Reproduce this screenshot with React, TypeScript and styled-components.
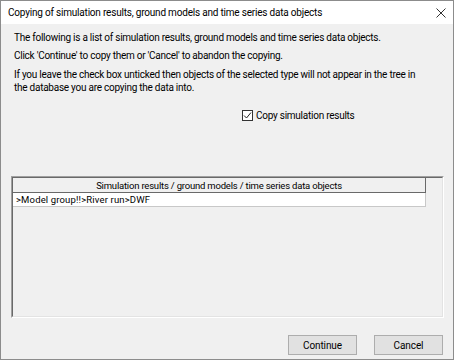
import React from "react";
import styled, { createGlobalStyle } from "styled-components";

const Global = createGlobalStyle`
  html, body { margin: 0; padding: 0; background: #f0f0f0; }
  body { font-family: Roboto, "Noto Sans", sans-serif; font-size: 10px; letter-spacing: -0.25px; color: #000; }
`;

const Window = styled.div`
  box-sizing: border-box;
  width: 454px;
  height: 360px;
  border: 1px solid #8c8c8c;
  background: #f0f0f0;
  display: flex;
  flex-direction: column;
`;

const TitleBar = styled.div`
  height: 23px;
  background: #fff;
  display: flex;
  align-items: center;
  justify-content: space-between;
  padding-left: 7px;
  flex: none;
`;

const Title = styled.span`
  font-size: 10px;
  letter-spacing: -0.2px;
  color: #000;
`;

const CloseButton = styled.div`
  width: 24px;
  height: 23px;
  display: flex;
  align-items: center;
  justify-content: center;
`;

const Body = styled.div`
  flex: 1;
  display: flex;
  flex-direction: column;
  padding: 7px 10px 4px 10px;
`;

const Para = styled.p<{ $gap?: number }>`
  margin: 0 0 ${(p) => p.$gap ?? 5}px 3px;
  line-height: 13px;
  white-space: nowrap;
`;

const CheckRow = styled.label`
  display: flex;
  align-items: center;
  gap: 3px;
  margin: 14px 0 0 231px;
  height: 14px;
`;

const Box = styled.span`
  box-sizing: border-box;
  width: 11px;
  height: 11px;
  border: 1px solid #333;
  background: #fff;
  display: flex;
  align-items: center;
  justify-content: center;
`;

const ListBox = styled.div`
  box-sizing: border-box;
  margin-top: 54px;
  width: 433px;
  height: 142px;
  border-top: 1px solid #a0a0a0;
  border-left: 1px solid #a0a0a0;
  border-right: 1px solid #fff;
  border-bottom: 1px solid #fff;
  flex: none;
`;

const ListInner = styled.div`
  box-sizing: border-box;
  height: 100%;
  border-top: 1px solid #696969;
  border-left: 1px solid #696969;
  border-right: 1px solid #e3e3e3;
  border-bottom: 1px solid #e3e3e3;
  background: #f0f0f0;
`;

const HeaderCell = styled.div`
  box-sizing: border-box;
  width: 413px;
  height: 15px;
  border-right: 1px solid #696969;
  border-bottom: 1px solid #696969;
  display: flex;
  align-items: center;
  justify-content: center;
  font-size: 9.5px;
  letter-spacing: -0.2px;
`;

const Row = styled.div`
  box-sizing: border-box;
  width: 413px;
  height: 14px;
  background: #fff;
  border-right: 1px solid #c8c8c8;
  border-bottom: 1px solid #c8c8c8;
  padding-left: 3px;
  display: flex;
  align-items: center;
  font-size: 9.5px;
  letter-spacing: 0.15px;
`;

const Footer = styled.div`
  display: flex;
  justify-content: flex-end;
  gap: 17px;
  margin-top: auto;
`;

const Button = styled.button`
  box-sizing: border-box;
  width: 69px;
  height: 20px;
  background: #e1e1e1;
  border: 1px solid #adadad;
  font-family: inherit;
  font-size: 10px;
  letter-spacing: -0.1px;
  color: #000;
  padding: 0;
`;

export default function App() {
  return (
    <>
      <Global />
      <Window>
        <TitleBar>
          <Title>Copying of simulation results, ground models and time series data objects</Title>
          <CloseButton>
            <svg width="10" height="10" viewBox="0 0 10 10">
              <path d="M0.5 0.5 L9.5 9.5 M9.5 0.5 L0.5 9.5" stroke="#333" strokeWidth="1" />
            </svg>
          </CloseButton>
        </TitleBar>
        <Body>
          <Para>The following is a list of simulation results, ground models and time series data objects.</Para>
          <Para $gap={6}>Click 'Continue' to copy them or 'Cancel' to abandon the copying.</Para>
          <Para $gap={0}>
            If you leave the check box unticked then objects of the selected type will not appear in the tree in
            <br />
            the database you are copying the data into.
          </Para>
          <CheckRow>
            <Box>
              <svg width="9" height="9" viewBox="0 0 9 9">
                <path d="M1 4.5 L3.5 7 L8 1.5" stroke="#222" strokeWidth="1" fill="none" />
              </svg>
            </Box>
            <span>Copy simulation results</span>
          </CheckRow>
          <ListBox>
            <ListInner>
              <HeaderCell>Simulation results / ground models / time series data objects</HeaderCell>
              <Row>&gt;Model group!!&gt;River run&gt;DWF</Row>
            </ListInner>
          </ListBox>
          <Footer>
            <Button>Continue</Button>
            <Button>Cancel</Button>
          </Footer>
        </Body>
      </Window>
    </>
  );
}
